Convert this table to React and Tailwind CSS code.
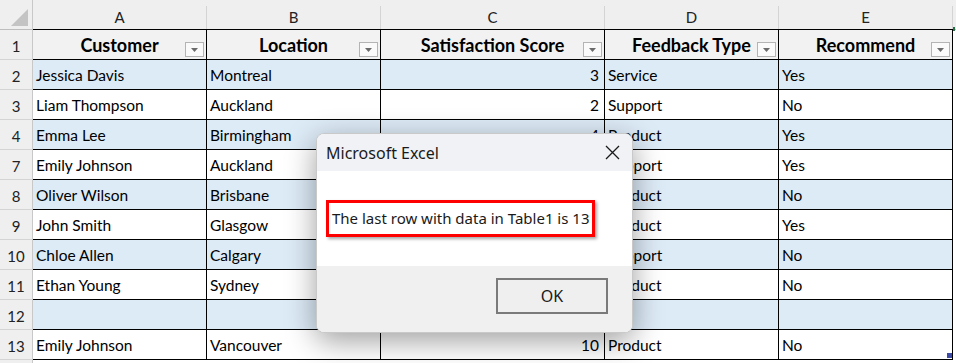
import React from "react";

const COLS = [
  { letter: "A", w: "w-[174px]", title: "Customer" },
  { letter: "B", w: "w-[174px]", title: "Location" },
  { letter: "C", w: "w-[224px]", title: "Satisfaction Score" },
  { letter: "D", w: "w-[174px]", title: "Feedback Type" },
  { letter: "E", w: "w-[174px]", title: "Recommend" },
];

const ROWS = [
  { n: 2, d: ["Jessica Davis", "Montreal", "3", "Service", "Yes"] },
  { n: 3, d: ["Liam Thompson", "Auckland", "2", "Support", "No"] },
  { n: 4, d: ["Emma Lee", "Birmingham", "4", "Product", "Yes"] },
  { n: 7, d: ["Emily Johnson", "Auckland", "5", "Support", "Yes"] },
  { n: 8, d: ["Oliver Wilson", "Brisbane", "3", "Product", "No"] },
  { n: 9, d: ["John Smith", "Glasgow", "4", "Product", "Yes"] },
  { n: 10, d: ["Chloe Allen", "Calgary", "2", "Support", "No"] },
  { n: 11, d: ["Ethan Young", "Sydney", "3", "Product", "No"] },
  { n: 12, d: ["", "", "", "", ""] },
  { n: 13, d: ["Emily Johnson", "Vancouver", "10", "Product", "No"] },
];

function Dropdown() {
  return (
    <div className="absolute right-[2px] bottom-[2px] w-[19px] h-[15px] border border-[#b4b4b4] bg-[#fafafa] flex items-center justify-center">
      <svg width="7" height="4" viewBox="0 0 7 4">
        <path d="M0 0 L7 0 L3.5 4 Z" fill="#6b6b6b" />
      </svg>
    </div>
  );
}

export default function App() {
  return (
    <div
      className="relative w-[956px] h-[363px] overflow-hidden bg-white text-black"
      style={{ fontFamily: "Lato, 'Liberation Sans', sans-serif" }}
    >
      {/* Column header */}
      <div className="flex h-[30px] bg-[#efefef]">
        <div className="w-[33px] h-full pt-[6px] border-r border-[#c8c8c8] border-b border-b-[#bdbdbd] relative">
          <svg className="absolute right-[4px] bottom-[3px]" width="17" height="17" viewBox="0 0 17 17">
            <path d="M17 0 L17 17 L0 17 Z" fill="#c4c4c4" />
          </svg>
        </div>
        {COLS.map((c) => (
          <div key={c.letter} className={`${c.w} h-full flex flex-col border-b border-black`}>
            <div className="h-[6px]" />
            <div className="flex-1 flex items-center justify-center border-r border-[#d4d4d4] text-[15px] text-[#222] pb-[1px]">
              {c.letter}
            </div>
          </div>
        ))}
        <div className="flex-1 h-full border-b border-[#bdbdbd] relative">
          <div className="absolute left-0 top-[27px] w-[2px] h-[4px] bg-[#217346]" />
        </div>
      </div>

      {/* Table header row */}
      <div className="flex h-[30px]">
        <div className="w-[33px] h-full bg-[#efefef] border-r border-[#c8c8c8] border-b border-b-[#d4d4d4] flex items-center justify-center text-[15px] text-[#222] pt-[3px]">
          1
        </div>
        {COLS.map((c) => (
          <div
            key={c.letter}
            className={`${c.w} h-full relative bg-[#f2f2f2] border-r border-b border-black flex items-center justify-center font-bold text-[18px] pt-[1px]`}
          >
            {c.title}
            <Dropdown />
          </div>
        ))}
        <div className="flex-1 h-full" />
      </div>

      {ROWS.map((r, i) => {
        const band = i % 2 === 0 ? "bg-[#ddebf7]" : "bg-white";
        return (
          <div key={r.n} className="flex h-[30px]">
            <div className="w-[33px] h-full bg-[#efefef] border-r border-[#c8c8c8] border-b border-b-[#d4d4d4] flex items-center justify-center text-[15px] text-[#222] pt-[3px]">
              {r.n}
            </div>
            {COLS.map((c, j) => (
              <div
                key={c.letter}
                className={`${c.w} h-full relative ${band} border-r border-b border-black flex items-center text-[15.5px] pt-[2px] ${
                  j === 2 ? "justify-end pr-[5px]" : "pl-[3px]"
                }`}
              >
                {r.d[j]}
                {r.n === 13 && j === 4 && (
                  <div className="absolute right-0 bottom-[1px] w-[5px] h-[5px] bg-[#3c4ba6]" />
                )}
              </div>
            ))}
            <div className="flex-1 h-full" />
          </div>
        );
      })}

      <div className="flex h-[4px]">
        <div className="w-[33px] h-full bg-[#efefef] border-r border-[#c8c8c8]" />
        <div className="flex-1" />
      </div>

      {/* Dialog */}
      <div
        className="absolute left-[316px] top-[133px] w-[317px] h-[200px] rounded-[8px] overflow-hidden border border-[#c9c9c9] bg-white flex flex-col shadow-[0_8px_30px_rgba(0,0,0,0.38)]"
        style={{ fontFamily: "'Noto Sans', 'Open Sans', sans-serif" }}
      >
        <div className="h-[37px] bg-[#f0f2f5] flex items-center justify-between pl-[9px] pr-[12px]">
          <span className="text-[16px] text-[#1a1a1a]">Microsoft Excel</span>
          <svg width="15" height="15" viewBox="0 0 15 15">
            <path d="M1 1 L14 14 M14 1 L1 14" stroke="#1a1a1a" strokeWidth="1.3" fill="none" />
          </svg>
        </div>
        <div className="h-[95px] bg-white pt-[29px] pl-[9px]">
          <div className="inline-flex items-center h-[37px] border-[3px] border-[#ff0000] px-[3px] text-[15px] text-[#1a1a1a] shadow-[2px_2px_3px_rgba(0,0,0,0.35)]">
            The last row with data in Table1 is 13
          </div>
        </div>
        <div className="flex-1 bg-[#f0f0f0] flex justify-end items-start pt-[12px] pr-[24px]">
          <div className="w-[112px] h-[36px] border-2 border-[#7a7a7a] bg-[#efefef] flex items-center justify-center text-[16px] text-[#1a1a1a]">
            OK
          </div>
        </div>
      </div>
    </div>
  );
}
